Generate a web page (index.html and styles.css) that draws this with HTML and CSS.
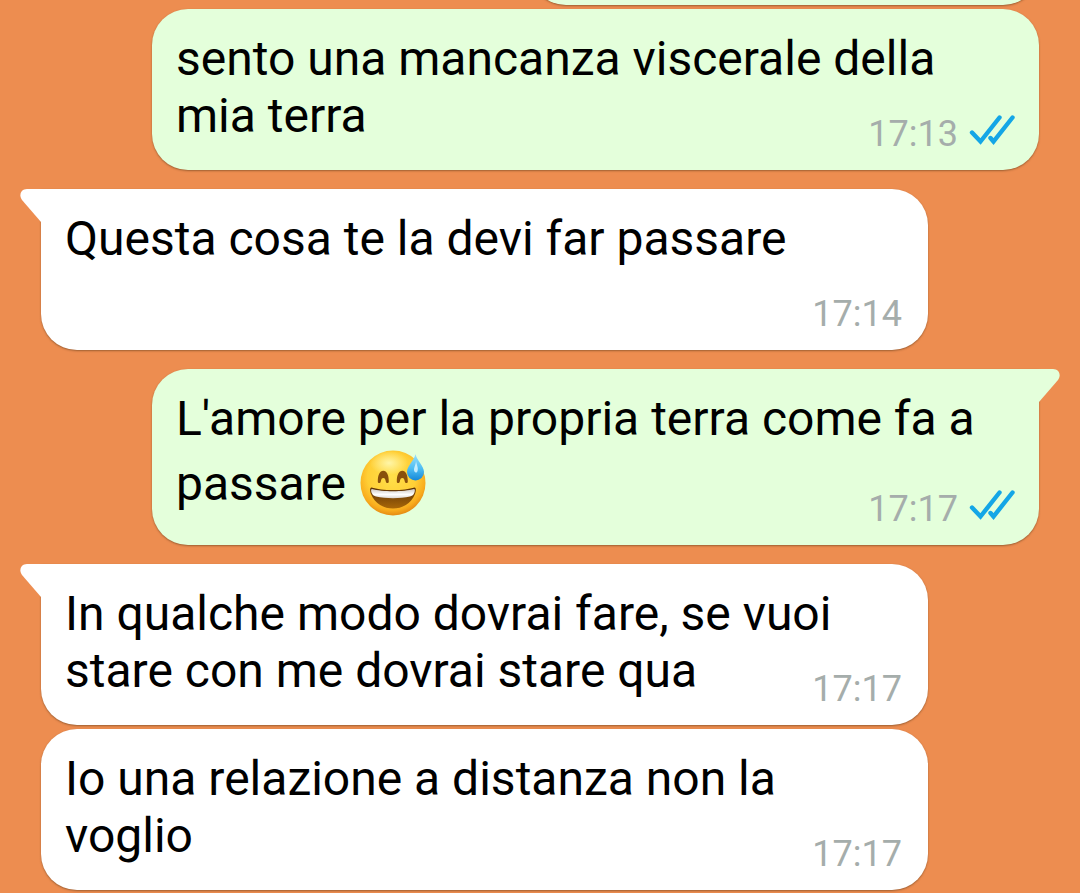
FILE: index.html
```
<!DOCTYPE html>
<html lang="it">
<head>
<meta charset="utf-8">
<meta name="viewport" content="width=device-width, initial-scale=1">
<title>Chat</title>
<link rel="stylesheet" href="styles.css">
</head>
<body>
<svg class="defs" aria-hidden="true">
  <defs>
    <symbol id="ticks" viewBox="0 0 46 34">
      <path d="M3 18.500l8.500 9L30.500 3.500M21.500 24l3 3.500L43.500 3.500" fill="none" stroke="#14a6e6" stroke-width="4.400" stroke-linecap="round"/>
    </symbol>
    <symbol id="tail" viewBox="0 0 24 36">
      <path d="M24 0H7C1 0-1.500 6 2 11L21 33H24Z" fill="currentColor"/>
    </symbol>
  </defs>
</svg>
<main class="chat">
  <div class="bubble sent short clipped"></div>
  <article class="bubble sent">
    <p class="text">sento una mancanza viscerale della mia terra</p>
    <footer class="meta"><time>17:13</time><svg class="ticks" role="img" aria-label="Letto"><use href="#ticks"/></svg></footer>
  </article>
  <article class="bubble received first">
    <svg class="tail" aria-hidden="true"><use href="#tail"/></svg>
    <p class="text">Questa cosa te la devi far passare</p>
    <footer class="meta"><time>17:14</time></footer>
  </article>
  <article class="bubble sent first">
    <svg class="tail" aria-hidden="true"><use href="#tail"/></svg>
    <p class="text">L'amore per la propria terra come fa a passare <svg class="emoji" viewBox="0 0 66 66" role="img" aria-label="Sorriso con sudore">
      <defs>
        <radialGradient id="face" cx=".48" cy=".4" r=".62"><stop offset="0" stop-color="#ffe04a"/><stop offset=".6" stop-color="#ffcf36"/><stop offset=".84" stop-color="#f9ac1d"/><stop offset="1" stop-color="#e08212"/></radialGradient>
        <radialGradient id="shine" cx=".5" cy=".5" r=".5"><stop offset="0" stop-color="#fff6a8"/><stop offset="1" stop-color="#fff6a8" stop-opacity="0"/></radialGradient>
        <linearGradient id="mouth" x1="0" y1="0" x2="0" y2="1"><stop offset="0" stop-color="#5b3207"/><stop offset="1" stop-color="#a96708"/></linearGradient>
        <linearGradient id="teeth" x1="0" y1="0" x2="0" y2="1"><stop offset="0" stop-color="#cfc9c4"/><stop offset=".6" stop-color="#fff"/><stop offset="1" stop-color="#ddd6cf"/></linearGradient>
        <linearGradient id="drop" x1="0" y1="0" x2="0" y2="1"><stop offset="0" stop-color="#9ce0fb"/><stop offset=".55" stop-color="#4dbdf2"/><stop offset="1" stop-color="#1588d8"/></linearGradient>
      </defs>
      <circle cx="33" cy="33" r="32.500" fill="url(#face)"/>
      <ellipse cx="29" cy="13" rx="19" ry="12" fill="url(#shine)"/>
      <path d="M17.800 31.500c0-6.500 2-10.700 5.500-10.700s5.500 4.200 5.500 10.700c0 2-2.600 2-3 0-.4-2.500-1.100-3.600-2.500-3.600s-2.100 1.100-2.500 3.600c-.4 2-3 2-3 0ZM36.800 31.500c0-6.500 2-10.700 5.500-10.700s5.500 4.200 5.500 10.700c0 2-2.600 2-3 0-.4-2.500-1.100-3.600-2.500-3.600s-2.100 1.100-2.500 3.600c-.4 2-3 2-3 0Z" fill="#89500c"/>
      <path d="M11.500 37.500c10 3.400 33 3.400 43 0 2 0 1.500 4 .5 6.500C51 54 42 58.500 33 58.500S15 54 11 44c-1-2.500-1.500-6.500.5-6.500Z" fill="url(#mouth)"/>
      <path d="M12 39c10 3 32 3 42 0 1.500 0 .8 3 0 4.500-1 1.800-2 2.500-4 3-10 2.300-24 2.300-34 0-2-.5-3-1.200-4-3-.8-1.500-1.500-4.500 0-4.500Z" fill="url(#teeth)"/>
      <path d="M55.500 4c1 6 8.500 12 8.500 18a8.500 8.500 0 0 1-17 0C47 16 54.500 10 55.500 4Z" fill="url(#drop)"/>
      <path d="M56 11c1 5 2.500 7 1.500 10s-4 1-3.500-2 2-5 2-8Z" fill="#e2f8ff" opacity=".8"/>
    </svg></p>
    <footer class="meta"><time>17:17</time><svg class="ticks" role="img" aria-label="Letto"><use href="#ticks"/></svg></footer>
  </article>
  <article class="bubble received first">
    <svg class="tail" aria-hidden="true"><use href="#tail"/></svg>
    <p class="text">In qualche modo dovrai fare, se vuoi stare con me dovrai stare qua</p>
    <footer class="meta"><time>17:17</time></footer>
  </article>
  <article class="bubble received">
    <p class="text">Io una relazione a distanza non la voglio</p>
    <footer class="meta"><time>17:17</time></footer>
  </article>
  <div class="bubble received"></div>
</main>
</body>
</html>
```
FILE: styles.css
```
* {
  box-sizing: border-box;
}

body {
  margin: 0;
  background: #ed8d50;
  color: #000;
  font-family: Roboto, "Liberation Sans", sans-serif;
}

.defs {
  position: absolute;
  width: 0;
  height: 0;
}

.chat {
  display: flex;
  flex-direction: column;
  gap: 4px;
  height: 100vh;
  padding: 0 41px;
  overflow: hidden;
}

.bubble {
  position: relative;
  flex: none;
  width: calc(100% - 111px);
  min-height: 161px;
  padding: 21px 24px 26px;
  border-radius: 36px;
  box-shadow: 0 1px 2px rgba(80, 50, 20, 0.5);
}

.sent {
  align-self: flex-end;
  background: #e4ffdb;
  color: #e4ffdb;
}

.received {
  align-self: flex-start;
  background: #fff;
  color: #fff;
}

.short {
  width: 51%;
}

.clipped {
  margin-top: -156px;
}

.first {
  margin-top: 15px;
}

.received.first {
  border-top-left-radius: 0;
}

.sent.first {
  border-top-right-radius: 0;
}

.tail {
  position: absolute;
  top: 0;
  left: -21px;
  width: 24px;
  height: 36px;
}

.sent .tail {
  right: -21px;
  left: auto;
  transform: scaleX(-1);
}

.text {
  margin: 0;
  color: #000;
  font-size: 48px;
  line-height: 57px;
}

.emoji {
  width: 66px;
  height: 66px;
  margin: 3px 2px;
  vertical-align: -19px;
}

.meta {
  position: absolute;
  right: 26px;
  bottom: 15px;
  display: flex;
  align-items: center;
  gap: 11px;
  color: #a5adab;
  font-size: 36px;
  line-height: 42px;
}

.sent .meta {
  right: 24px;
}

.ticks {
  width: 46px;
  height: 34px;
  margin-bottom: 6px;
}
```
